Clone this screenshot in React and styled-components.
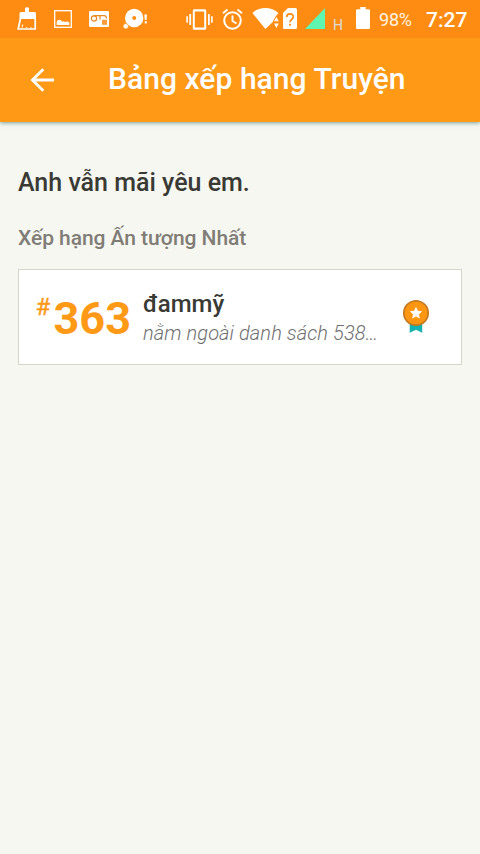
import React from 'react';
import styled, { createGlobalStyle } from 'styled-components';

const GlobalStyle = createGlobalStyle`
    body {
        margin: 0;
        background: #f6f7f1;
        font-family: Roboto, "Noto Sans", sans-serif;
    }
`;
const Screen = styled.div`
    width: 480px;
    min-height: 854px;
    background: #f6f7f1;
`;
const Header = styled.header`
    position: relative;
    height: 122px;
    background: #ff9916;
    box-shadow: 0 1px 4px rgba(20, 80, 80, 0.55);
`;
const StatusBar = styled.div`
    display: flex;
    align-items: center;
    height: 38px;
    background: #ff8c12;
    color: #fff;
`;
const StatusIcon = styled.svg`
    flex: none;
    height: 24px;
    width: ${props => props.$width}px;
    margin-left: ${props => props.$gap}px;
`;
const Network = styled.span`
    width: 10px;
    margin: 12px 0 0 8px;
    font-size: 14px;
    line-height: 14px;
    color: #dcdcdc;
`;
const Percent = styled.span`
    width: 34px;
    margin-left: 9px;
    font-size: 18px;
    letter-spacing: -0.2px;
    white-space: nowrap;
    color: #fff3e0;
`;
const Clock = styled.span`
    margin: 2px 0 0 13px;
    font-size: 21px;
    font-weight: 500;
    white-space: nowrap;
`;
const AppBar = styled.div`
    display: flex;
    align-items: center;
    height: 84px;
    padding-left: 30px;
`;
const BackButton = styled.button`
    display: flex;
    width: 24px;
    height: 24px;
    padding: 0;
    border: 0;
    background: none;
`;
const Title = styled.h1`
    margin: 0 0 3px 54px;
    font-size: 30px;
    line-height: 40px;
    font-weight: 500;
    letter-spacing: 0.05px;
    color: #fff;
    white-space: nowrap;
`;
const Content = styled.main`
    padding: 43px 18px 0;
`;
const StoryTitle = styled.h2`
    margin: 0;
    font-size: 25px;
    line-height: 36px;
    font-weight: 500;
    color: #3a3a35;
    white-space: nowrap;
`;
const SectionTitle = styled.h3`
    margin: 23px 0 16px;
    font-size: 21px;
    line-height: 29px;
    font-weight: 500;
    letter-spacing: -0.05px;
    color: #807c76;
    white-space: nowrap;
`;
const Card = styled.div`
    display: flex;
    box-sizing: border-box;
    height: 96px;
    padding-left: 17px;
    border: 1px solid #d5d7c9;
    background: #fff;
`;
const Hash = styled.span`
    width: 18px;
    margin-top: 22px;
    font-size: 24px;
    line-height: 30px;
    font-weight: 400;
    text-indent: -0.5px;
    color: #ff9916;
    -webkit-text-stroke: 0.3px #ff9916;
`;
const Rank = styled.span`
    width: 89px;
    margin-top: 21px;
    font-size: 45px;
    line-height: 56px;
    font-weight: 700;
    text-indent: -0.5px;
    color: #ff9916;
`;
const Details = styled.div`
    width: 236px;
    padding-top: 18px;
`;
const Tag = styled.div`
    font-size: 24px;
    line-height: 32px;
    font-weight: 500;
    color: #3a3a35;
`;
const Note = styled.div`
    font-size: 20px;
    line-height: 26px;
    font-weight: 300;
    font-style: italic;
    letter-spacing: 0.1px;
    color: #6f6f6f;
    white-space: nowrap;
`;
const Medal = styled.svg`
    width: 28px;
    height: 34px;
    margin: 30px 0 0 23px;
`;

function Icon({ width, gap, children }) {
    return (
        <StatusIcon $width={width} $gap={gap} viewBox={`0 0 ${width} 24`} fill="#fff">
            {children}
        </StatusIcon>
    )
}

function Notifications() {
    return (
        <>
            {/* cleaner */}
            <Icon width={20} gap={17}>
                <path d="M8 1.5Q8 .3 10 .3T12 1.5V5H17.5Q19 5 19 6.5V12H2.5V6.5Q2.5 5 4 5H8Z" />
                <path d="M3.5 11.5L1.2 22H18.2V11.5" fill="none" stroke="#fff" strokeWidth="1.7" />
                <path d="M5.7 17.5L5 20.5" stroke="#fff" strokeWidth="1.1" />
                <path d="M9.7 20V21.5M14 20V21.5" stroke="#fff" strokeWidth="1" />
            </Icon>
            {/* picture */}
            <Icon width={18} gap={17}>
                <rect x=".7" y="3.7" width="16.6" height="16.6" fill="none" stroke="#fff" strokeWidth="1.3" />
                <path d="M2.7 18V15Q3 12.7 5.7 12.7Q7 12.7 8 14.7Q9.5 13.7 11 14.9Q13.5 13.7 15.3 15.5V18Z" />
            </Icon>
            {/* voicemail card */}
            <Icon width={20} gap={17}>
                <rect y="4" width="20" height="16" rx="1.3" />
                <g fill="none" stroke="#e88b20" strokeWidth="1.2">
                    <circle cx="5" cy="11.5" r="2.6" />
                    <path d="M4.5 8.7H15Q17.5 8.7 17.5 11.5M11 9V12.5" />
                </g>
                <rect x="13" y="12.8" width="5" height="5" fill="#ff9c3c" />
            </Icon>
            {/* disc */}
            <Icon width={25} gap={14}>
                <circle cx="11.2" cy="11" r="9.2" />
                <circle cx="11.2" cy="11" r="2" fill="#ff8c12" />
                <circle cx="2.8" cy="19.2" r="2.6" stroke="#ff8c12" strokeWidth=".6" />
                <path d="M21.3 7.5H24L23.5 13H21.8ZM21.7 14.3H23.8V16.4H21.7Z" />
            </Icon>
        </>
    )
}

function SystemIcons() {
    return (
        <>
            {/* vibrate */}
            <Icon width={28} gap={38}>
                <path d="M8 2.2H19Q20.2 2.2 20.2 3.7V21.3Q20.2 22.8 19 22.8H8Q6.8 22.8 6.8 21.3V3.7Q6.8 2.2 8 2.2ZM8.8 4.6V20.4H18.2V4.6Z" fillRule="evenodd" />
                <path d="M3.3 7H5.1V18H3.3ZM.3 9.3H1.9V15.7H.3ZM22 7H23.8V18H22ZM25.1 9.3H26.7V15.7H25.1Z" />
            </Icon>
            {/* alarm */}
            <Icon width={22} gap={8}>
                <circle cx="10.5" cy="13.5" r="8.3" fill="none" stroke="#fff" strokeWidth="2" />
                <path d="M10.5 8.5V14L14.5 16.5M1 6.3L5.5 2.6M15.5 2.6L20 6.3" fill="none" stroke="#fff" strokeWidth="1.9" />
            </Icon>
            {/* wifi with traffic arrows */}
            <Icon width={28} gap={8}>
                <path d="M.4 6Q5.5 1 13.2 1T26.4 6L23.6 9.5L20.8 14.5V15L13.4 22Z" />
                <path d="M22 14.3L24.4 10L26.8 14.3ZM22 16.5H26.8L24.4 21Z" />
            </Icon>
            {/* sim */}
            <Icon width={15} gap={3}>
                <path d="M5 1H12.5Q14 1 14 2.5V20.5Q14 22 12.5 22H1.5Q0 22 0 20.5V6Z" />
                <path d="M3.7 10Q3.7 6.8 7 6.8T10.2 9.7Q10.2 11.2 8.5 12.6Q7 13.8 7 15.3" fill="none" stroke="#ff8c12" strokeWidth="1.7" />
                <rect x="6.1" y="16.8" width="1.9" height="1.9" fill="#ff8c12" />
            </Icon>
            {/* signal */}
            <Icon width={20} gap={7}>
                <path d="M0 22L20 1V22Z" fill="#5df5b0" />
            </Icon>
        </>
    )
}

function RankCard({ rank, tag, note }) {
    return (
        <Card>
            <Hash>#</Hash>
            <Rank>{rank}</Rank>
            <Details>
                <Tag>{tag}</Tag>
                <Note>{note}</Note>
            </Details>
            <Medal viewBox="0 0 28 34">
                <path d="M7.7 21H20.2V32.8L14 29.8L7.7 32.8Z" fill="#10b3b0" />
                <circle cx="14" cy="13" r="12.2" fill="#ff9611" stroke="#c47a20" strokeWidth="1.7" />
                <path d="M14 6.7L15.9 10.7L20.2 11.2L17 14.2L17.8 18.5L14 16.4L10.2 18.5L11 14.2L7.8 11.2L12.1 10.7Z" fill="#fff" />
            </Medal>
        </Card>
    )
}

export function App() {
    return (
        <Screen>
            <GlobalStyle />
            <Header>
                <StatusBar>
                    <Notifications />
                    <SystemIcons />
                    <Network>H</Network>
                    <Icon width={14} gap={13}>
                        <path d="M4.3 0H9.7V2.3H12.8Q14 2.3 14 3.5V20.8Q14 22 12.8 22H1.2Q0 22 0 20.8V3.5Q0 2.3 1.2 2.3H4.3Z" />
                    </Icon>
                    <Percent>98%</Percent>
                    <Clock>7:27</Clock>
                </StatusBar>
                <AppBar>
                    <BackButton aria-label="back">
                        <svg width="24" height="24" viewBox="0 0 24 24" fill="none" stroke="#fff" strokeWidth="2.8">
                            <path d="M24 12H3M13.3 1.3L2.4 12L13.3 22.7" />
                        </svg>
                    </BackButton>
                    <Title>Bảng xếp hạng Truyện</Title>
                </AppBar>
            </Header>
            <Content>
                <StoryTitle>Anh vẫn mãi yêu em.</StoryTitle>
                <SectionTitle>Xếp hạng Ấn tượng Nhất</SectionTitle>
                <RankCard rank="363" tag="đammỹ" note="nằm ngoài danh sách 538…" />
            </Content>
        </Screen>
    )
}
export default App;
